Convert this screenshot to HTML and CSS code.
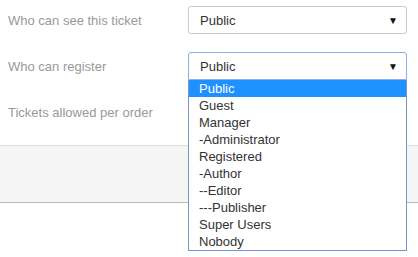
FILE: index.html
```html
<!DOCTYPE html>
<html lang="en">

<head>
    <meta charset="UTF-8">
    <meta name="viewport" content="width=device-width, initial-scale=1.0">
    <title>Ticket access</title>
    <link rel="stylesheet" href="styles.css">
</head>

<body>
    <div class="form">
        <div class="row">
            <label class="label">Who can see this ticket</label>
            <div class="select"><span>Public</span><span class="arrow">&#9660;</span></div>
        </div>
        <div class="row">
            <label class="label">Who can register</label>
            <div class="field">
                <div class="select focus"><span>Public</span><span class="arrow">&#9660;</span></div>
                <ul class="options">
                    <li class="active">Public</li>
                    <li>Guest</li>
                    <li>Manager</li>
                    <li>-Administrator</li>
                    <li>Registered</li>
                    <li>-Author</li>
                    <li>--Editor</li>
                    <li>---Publisher</li>
                    <li>Super Users</li>
                    <li>Nobody</li>
                </ul>
            </div>
        </div>
        <div class="row">
            <label class="label">Tickets allowed per order</label>
            <div class="select input"></div>
        </div>
    </div>
    <div class="footer"></div>
</body>

</html>
```
FILE: styles.css
```css
* {
    margin: 0;
    padding: 0;
    box-sizing: border-box;
    font-family: 'Liberation Sans', Arial, sans-serif;
}

body {
    background: #fff;
    min-height: 100vh;
}

.form {
    padding-top: 6px;
    display: flex;
    flex-direction: column;
    gap: 18px;
}

.row {
    display: flex;
    align-items: center;
    height: 28px;
}

.label {
    width: 188px;
    padding-left: 8px;
    font-size: 13px;
    color: #999;
}

.field {
    position: relative;
    z-index: 2;
}

.select {
    width: 219px;
    height: 28px;
    border: 1px solid #ccc;
    border-radius: 3px;
    padding: 0 8px 0 11px;
    display: flex;
    align-items: center;
    justify-content: space-between;
    font-size: 13px;
    color: #333;
    background: #fff;
}

.select.focus {
    border-color: #8eaee3;
    border-radius: 3px 3px 0 0;
}

.arrow {
    font-size: 10px;
    color: #111;
}

.options {
    position: absolute;
    top: 28px;
    left: 0;
    width: 219px;
    list-style: none;
    background: #fff;
    border: 1px solid #7895d3;
    border-top: none;
}

.options li {
    height: 17px;
    line-height: 17px;
    padding-left: 10px;
    font-size: 13px;
    color: #333;
}

.options li.active {
    background: #1e90ff;
    color: #fff;
}

.footer {
    margin-top: 19px;
    height: 58px;
    background: #f5f5f5;
    border-top: 1px solid #ddd;
    border-bottom: 1px solid #bbb;
}
```
